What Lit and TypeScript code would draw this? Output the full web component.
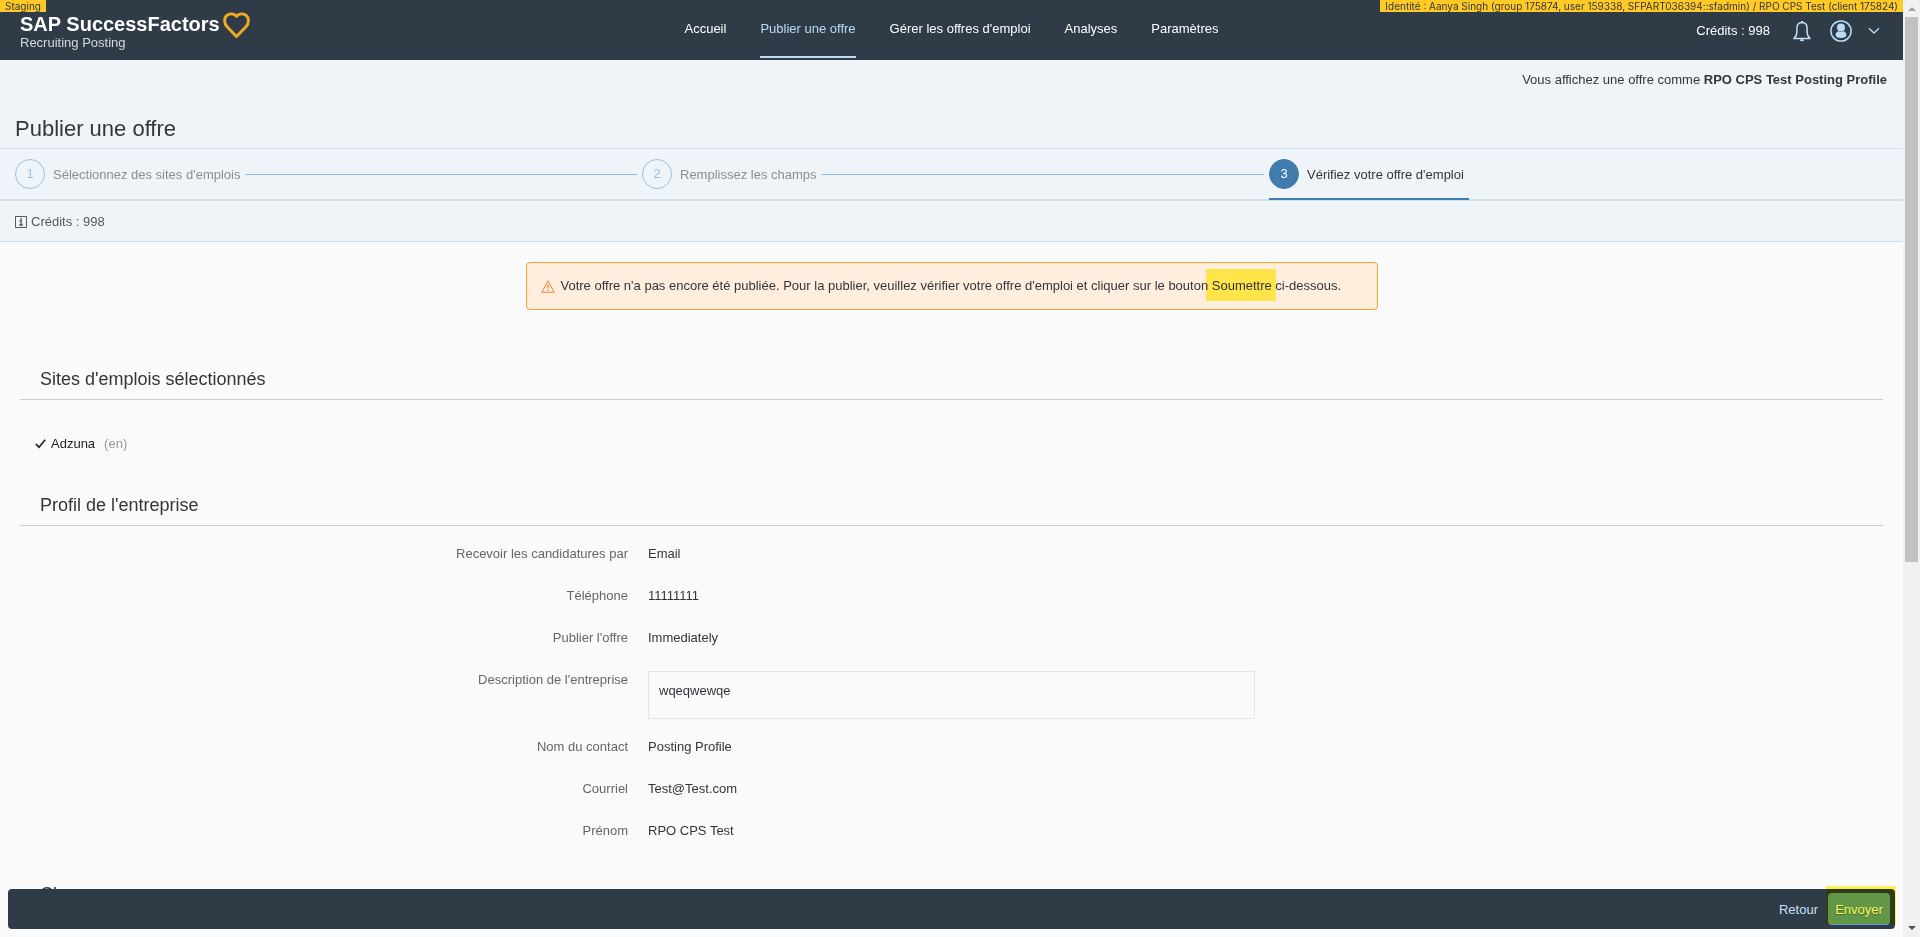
import { LitElement, html, css, svg } from "lit";
import { customElement } from "lit/decorators.js";

interface Field { label: string; value: string; boxed?: boolean; }

const NAV = ["Accueil", "Publier une offre", "Gérer les offres d'emploi", "Analyses", "Paramètres"];
const STEPS = ["Sélectionnez des sites d'emplois", "Remplissez les champs", "Vérifiez votre offre d'emploi"];
const FIELDS: Field[] = [
  { label: "Recevoir les candidatures par", value: "Email" },
  { label: "Téléphone", value: "11111111" },
  { label: "Publier l'offre", value: "Immediately" },
  { label: "Description de l'entreprise", value: "wqeqwewqe", boxed: true },
  { label: "Nom du contact", value: "Posting Profile" },
  { label: "Courriel", value: "Test@Test.com" },
  { label: "Prénom", value: "RPO CPS Test" },
];

const heart = svg`<svg class="heart" width="27" height="27" viewBox="0 0 28 28" fill="none" stroke="#f0ab1f" stroke-width="3" stroke-linejoin="round"><path d="M14 25.4 L4.4 15.6 C0.6 11.6 0.8 5.6 4.6 3.2 C7.8 1.2 11.8 1.6 14 4.4 C16.2 1.6 20.2 1.2 23.4 3.2 C27.2 5.6 27.4 11.6 23.6 15.6 Z"/></svg>`;
const bell = svg`<svg width="18" height="22" viewBox="0 0 18 22" fill="none" stroke="#c3e2fa" stroke-width="1.5" stroke-linejoin="round"><path d="M9 2.6 C5.4 2.7 3.9 5 3.9 8.2 V12.6 C3.9 15.4 2.8 16.8 1 18.6 H17 C15.2 16.8 14.1 15.4 14.1 12.6 V8.2 C14.1 5 12.6 2.7 9 2.6 Z"/><path d="M7.2 20.2 H10.8" stroke-width="1.8"/><path d="M9 1 V2.6" stroke-width="2"/></svg>`;
const avatar = svg`<svg width="22" height="22" viewBox="0 0 22 22"><circle cx="11" cy="11" r="10.1" fill="none" stroke="#b9dcf6" stroke-width="1.5"/><circle cx="11" cy="7.6" r="4" fill="#b9dcf6"/><path d="M5.6 15 C5.6 12.4 7.4 11.4 8.8 11.2 Q11 12.6 13.2 11.2 C14.6 11.4 16.4 12.4 16.4 15 C16.4 17 14 18 11 18 C8 18 5.6 17 5.6 15 Z" fill="#b9dcf6"/></svg>`;
const chevron = svg`<svg width="12" height="8" viewBox="0 0 12 8" fill="none" stroke="#b9dcf6" stroke-width="1.3"><path d="M1 1.2 L6 6 L11 1.2"/></svg>`;
const info = svg`<svg width="12" height="12" viewBox="0 0 12 12" fill="none" stroke="#55585b" stroke-width="1"><path d="M0.5 0.5 H11.5 V11.5 H0.5 Z"/><path d="M4.5 5 H6.2 V9 M4.2 9 H8 M5.2 3 H7" stroke-width="1.3"/></svg>`;
const warning = svg`<svg width="14" height="13" viewBox="0 0 14 13" fill="none" stroke="#e98a3c" stroke-width="1"><path d="M7 0.8 L13.2 12.3 H0.8 Z" stroke-linejoin="round"/><path d="M7 4.2 V8.6 M7 9.6 V11" stroke-width="1.3"/></svg>`;
const check = svg`<svg width="11" height="10" viewBox="0 0 11 10" fill="none" stroke="#222" stroke-width="1.7"><path d="M0.8 5 L4 8.2 L10.2 0.8"/></svg>`;

@customElement("app-root")
export class AppRoot extends LitElement {
  static styles = css`
    :host { display: block; font: 13px/18px "Liberation Sans", Arial, sans-serif; color: #32363a; }
    * { box-sizing: border-box; }
    svg { display: block; flex: none; }
    h1, h2, p, dl, dd, ol { margin: 0; padding: 0; font-weight: normal; }
    a { color: inherit; text-decoration: none; }
    button { font: inherit; border: 0; padding: 0; background: none; cursor: pointer; }
    .window { display: grid; grid-template-columns: minmax(0, 1fr) 17px; height: 100vh; overflow: hidden; }
    .page { position: relative; overflow: hidden; background: #fafafa; }

    .shell { position: relative; height: 60px; background: #2f3c48; color: #fff; display: grid; grid-template-columns: 1fr auto 1fr; }
    .tag { position: absolute; top: 0; background: #ffc926; color: #32363a; font-family: Inter, "Liberation Sans", sans-serif; font-size: 10px; line-height: 12px; padding: 0 5px; white-space: nowrap; }
    .tag.left { left: 0; }
    .tag.right { right: 0; }
    .brand { display: flex; gap: 3px; padding: 12px 0 0 20px; }
    .name { display: block; font-size: 20px; line-height: 24px; font-weight: bold; }
    .product { display: block; font-size: 13px; line-height: 14px; color: #d5d9dc; }
    .menu { display: flex; gap: 34px; height: 58px; }
    .menu a { padding-top: 20px; border-bottom: 2px solid transparent; }
    .menu a.current { color: #b9dcf6; border-color: #b9dcf6; }
    .tools { display: flex; justify-content: flex-end; align-items: center; padding: 2px 23px 0 0; }
    .tools span { margin-right: 23px; }
    .tools .bell { margin-right: 19px; }
    .tools .user { display: flex; align-items: center; gap: 16px; }

    .intro { background: #eff4f9; }
    .profile { text-align: right; padding: 11px 16px 0; }
    h1 { font-size: 22px; line-height: 28px; padding: 26px 15px 5px; }
    .steps { list-style: none; display: flex; border-top: 1px solid #cfe0ef; border-bottom: 2px solid #cfe0ef; padding: 0 7px 0 15px; height: 53px; color: #8b8e91; }
    .step { display: flex; align-items: center; flex: 1; height: 50px; padding-right: 5px; }
    .step a { padding-top: 2px; }
    .num { width: 30px; height: 30px; border: 1px solid #9fc0dc; border-radius: 50%; color: #9fc0dc; text-align: center; line-height: 27px; margin-right: 8px; }
    .line { flex: 1; height: 1px; background: #91b8d6; margin-left: 5px; }
    .step.active { color: #32363a; height: 51px; }
    .step.active a { display: flex; align-items: center; height: 51px; padding: 1px 5px 0 0; border-bottom: 2px solid #427cac; }
    .active .text { padding-top: 1px; }
    .active .num { background: #427cac; color: #fff; border-color: #427cac; }
    .credits { display: flex; align-items: center; gap: 4px; padding: 2px 15px 0; height: 41px; border-bottom: 1px solid #cfe0ef; color: #55585b; }

    .alert { width: 852px; max-width: 96%; margin: 20px auto 0; min-height: 48px; display: flex; align-items: center; gap: 6px; padding: 0 14px; background: #ffeedd; border: 1px solid #f9a429; border-radius: 4px; }
    mark { background: #fff655; color: inherit; padding: 9px 4px 8px 6px; margin: 0 -4px 0 -6px; mix-blend-mode: multiply; }
    section { margin: 0 20px; }
    h2 { font-size: 18px; line-height: 24px; padding: 0 20px 8px; border-bottom: 1px solid #cbcccc; }
    .sites { padding-top: 57px; }
    .site { display: flex; align-items: center; padding: 35px 15px 40px; line-height: 18px; gap: 5px; color: #222; }
    .site small { font-size: 13px; color: #96989a; margin-left: 4px; }
    .fields { padding: 7px 0 30px; }
    .field { display: grid; grid-template-columns: 608px 607px; column-gap: 20px; min-height: 42px; padding-top: 12px; }
    dt { text-align: right; color: #63676a; }
    .field.boxed { min-height: 67px; }
    .boxed dd { height: 48px; border: 1px solid #e5e5e5; padding: 10px; }

    .footer { position: absolute; left: 8px; right: 8px; bottom: 8px; height: 40px; border-radius: 4px; background: #2f3c48; display: flex; justify-content: flex-end; align-items: center; padding-right: 5px; gap: 10px; }
    .back { color: #c9e0f5; padding-top: 2px; }
    .send { width: 62px; height: 32px; padding-top: 2px; border-radius: 4px; background: #629dd6; color: #fff; text-shadow: 0 1px 1px #36689a; }
    .glow { position: absolute; right: -1px; top: -3px; width: 70px; height: 38px; background: #fff655; mix-blend-mode: multiply; pointer-events: none; }

    .bar { background: #f1f1f1; display: flex; flex-direction: column; align-items: center; padding: 7px 0; }
    .thumb { width: 13px; height: 59%; margin-top: 6px; background: #c1c1c1; }
    .down { margin-top: auto; }
  `;

  render() {
    return html`<div class="window">
      <div class="page">
        <header class="shell">
          <div class="tag left">Staging</div>
          <div class="tag right">Identité : Aanya Singh (group 175874, user 159338, SFPART036394::sfadmin) / RPO CPS Test (client 175824)</div>
          <div class="brand"><div><span class="name">SAP SuccessFactors</span><span class="product">Recruiting Posting</span></div>${heart}</div>
          <nav class="menu">${NAV.map((n, i) => html`<a href="#" class=${i === 1 ? "current" : ""}>${n}</a>`)}</nav>
          <div class="tools"><span>Crédits : 998</span>
            <button class="bell" aria-label="Notifications">${bell}</button>
            <button class="user" aria-label="Compte">${avatar}${chevron}</button></div>
        </header>
        <div class="intro">
          <p class="profile">Vous affichez une offre comme <b>RPO CPS Test Posting Profile</b></p>
          <h1>Publier une offre</h1>
          <ol class="steps">${STEPS.map((s, i) => i < 2
            ? html`<li class="step"><span class="num">${i + 1}</span><a href="#">${s}</a><span class="line"></span></li>`
            : html`<li class="step active"><a href="#" aria-current="step"><span class="num">${i + 1}</span><span class="text">${s}</span></a></li>`)}</ol>
          <div class="credits">${info}<span>Crédits : 998</span></div>
        </div>
        <main>
          <div class="alert" role="status">${warning}<p>Votre offre n'a pas encore été publiée. Pour la publier, veuillez vérifier votre offre d'emploi et cliquer sur le bouton <mark>Soumettre</mark> ci-dessous.</p></div>
          <section class="sites"><h2>Sites d'emplois sélectionnés</h2>
            <div class="site">${check}<span>Adzuna</span><small>(en)</small></div></section>
          <section><h2>Profil de l'entreprise</h2>
            <dl class="fields">${FIELDS.map((f) => html`<div class="field ${f.boxed ? "boxed" : ""}"><dt>${f.label}</dt><dd>${f.value}</dd></div>`)}</dl></section>
          <section><h2>Champs</h2></section>
        </main>
        <footer class="footer"><button class="back">Retour</button><button class="send">Envoyer</button><span class="glow"></span></footer>
      </div>
      <div class="bar" aria-hidden="true">
        <svg width="8" height="4" viewBox="0 0 8 4"><path d="M0 4 L4 0 L8 4 Z" fill="#a3a3a3"/></svg>
        <div class="thumb"></div>
        <svg class="down" width="8" height="4" viewBox="0 0 8 4"><path d="M0 0 L4 4 L8 0 Z" fill="#505050"/></svg>
      </div>
    </div>`;
  }
}
